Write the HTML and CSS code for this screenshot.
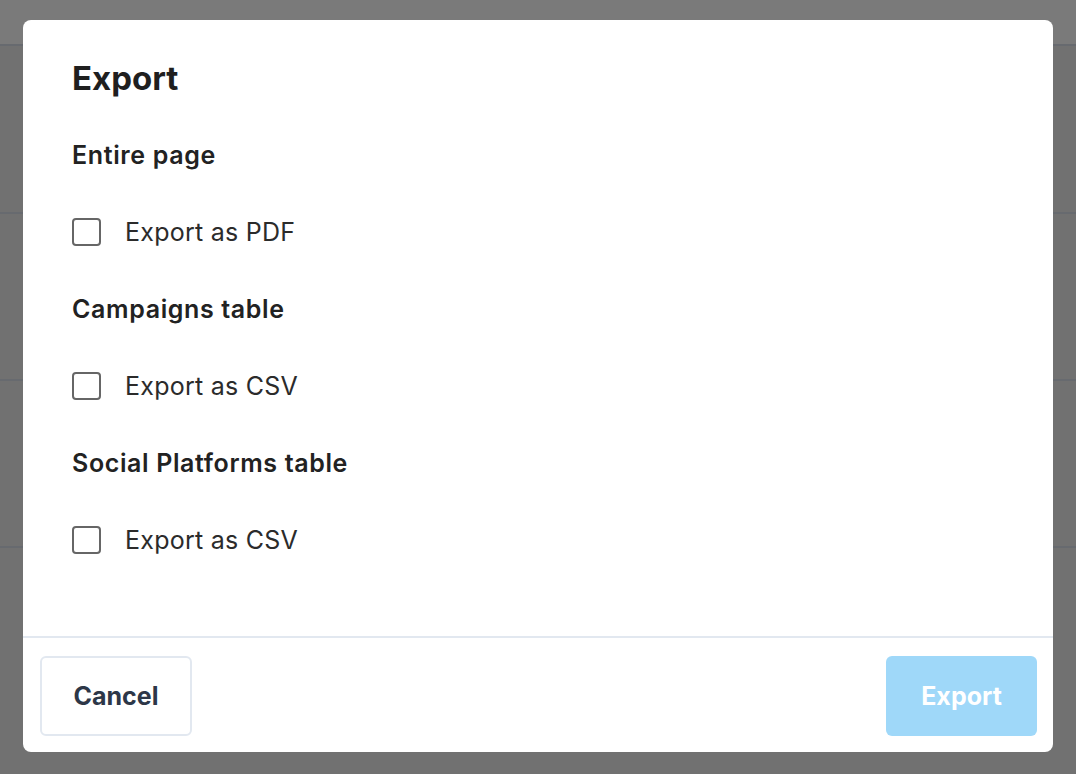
FILE: index.html
```html
<!DOCTYPE html>
<html lang="en">
<head>
<meta charset="utf-8">
<title>Export</title>
<link rel="stylesheet" href="styles.css">
</head>
<body>
<div class="backdrop">
  <div class="bg-header"></div>
  <div class="bg-row first"></div>
  <div class="bg-row"></div>
  <div class="bg-row"></div>
  <div class="bg-row last"></div>
</div>
<div class="modal" role="dialog" aria-labelledby="modal-title">
  <div class="modal-body">
    <h1 id="modal-title" class="modal-title">Export</h1>
    <h2 class="section-title">Entire page</h2>
    <label class="option"><span class="box"></span><span class="option-label">Export as PDF</span></label>
    <h2 class="section-title">Campaigns table</h2>
    <label class="option"><span class="box"></span><span class="option-label">Export as CSV</span></label>
    <h2 class="section-title">Social Platforms table</h2>
    <label class="option"><span class="box"></span><span class="option-label">Export as CSV</span></label>
  </div>
  <div class="modal-footer">
    <button class="btn btn-cancel">Cancel</button>
    <button class="btn btn-export" disabled>Export</button>
  </div>
</div>
</body>
</html>
```
FILE: styles.css
```css
* { box-sizing: border-box; }
html, body { margin: 0; padding: 0; }
body {
  width: 1076px;
  height: 774px;
  overflow: hidden;
  background: #717171;
  font-family: Inter, "Noto Sans", "Liberation Sans", sans-serif;
}
.backdrop {
  display: flex;
  flex-direction: column;
  height: 774px;
}
.bg-header {
  height: 46px;
  background: #7a7a7a;
  border-bottom: 2px solid #676a6f;
}
.bg-row {
  height: 167px;
  border-bottom: 2px solid #676a6f;
}
.bg-row.first { height: 168px; }
.bg-row.last { border-bottom: none; flex: 1; }

.modal {
  position: absolute;
  left: 23px;
  top: 20px;
  width: 1030px;
  height: 732px;
  background: #ffffff;
  border-radius: 8px;
  display: flex;
  flex-direction: column;
  overflow: hidden;
}
.modal-body {
  flex: 1;
  display: flex;
  flex-direction: column;
  align-items: flex-start;
  gap: 49px;
  padding: 44px 49px 0;
}
.modal-title {
  margin: 0;
  font-size: 33px;
  line-height: 28px;
  font-weight: 700;
  color: #1f1f1f;
}
.section-title {
  margin: 0;
  font-size: 25px;
  line-height: 28px;
  font-weight: 600;
  color: #222222;
  letter-spacing: 0.63px;
}
.option {
  display: flex;
  align-items: center;
  gap: 24px;
  height: 28px;
}
.box {
  width: 29px;
  height: 28px;
  border: 2.5px solid #666666;
  border-radius: 4px;
  background: #ffffff;
}
.option-label {
  font-size: 25px;
  line-height: 28px;
  color: #2b2b2b;
  letter-spacing: 0.25px;
}
.modal-footer {
  border-top: 2px solid #e2e8f0;
  padding: 18px 16px 16px 17px;
  display: flex;
  justify-content: space-between;
}
.btn {
  height: 80px;
  border-radius: 6px;
  font-family: inherit;
  font-size: 25px;
  font-weight: 700;
  padding: 0;
}
.btn-cancel {
  width: 152px;
  background: #ffffff;
  border: 2px solid #e2e8f0;
  color: #2d3748;
}
.btn-export {
  width: 151px;
  background: #9fd8f9;
  border: none;
  color: #ffffff;
}
```
